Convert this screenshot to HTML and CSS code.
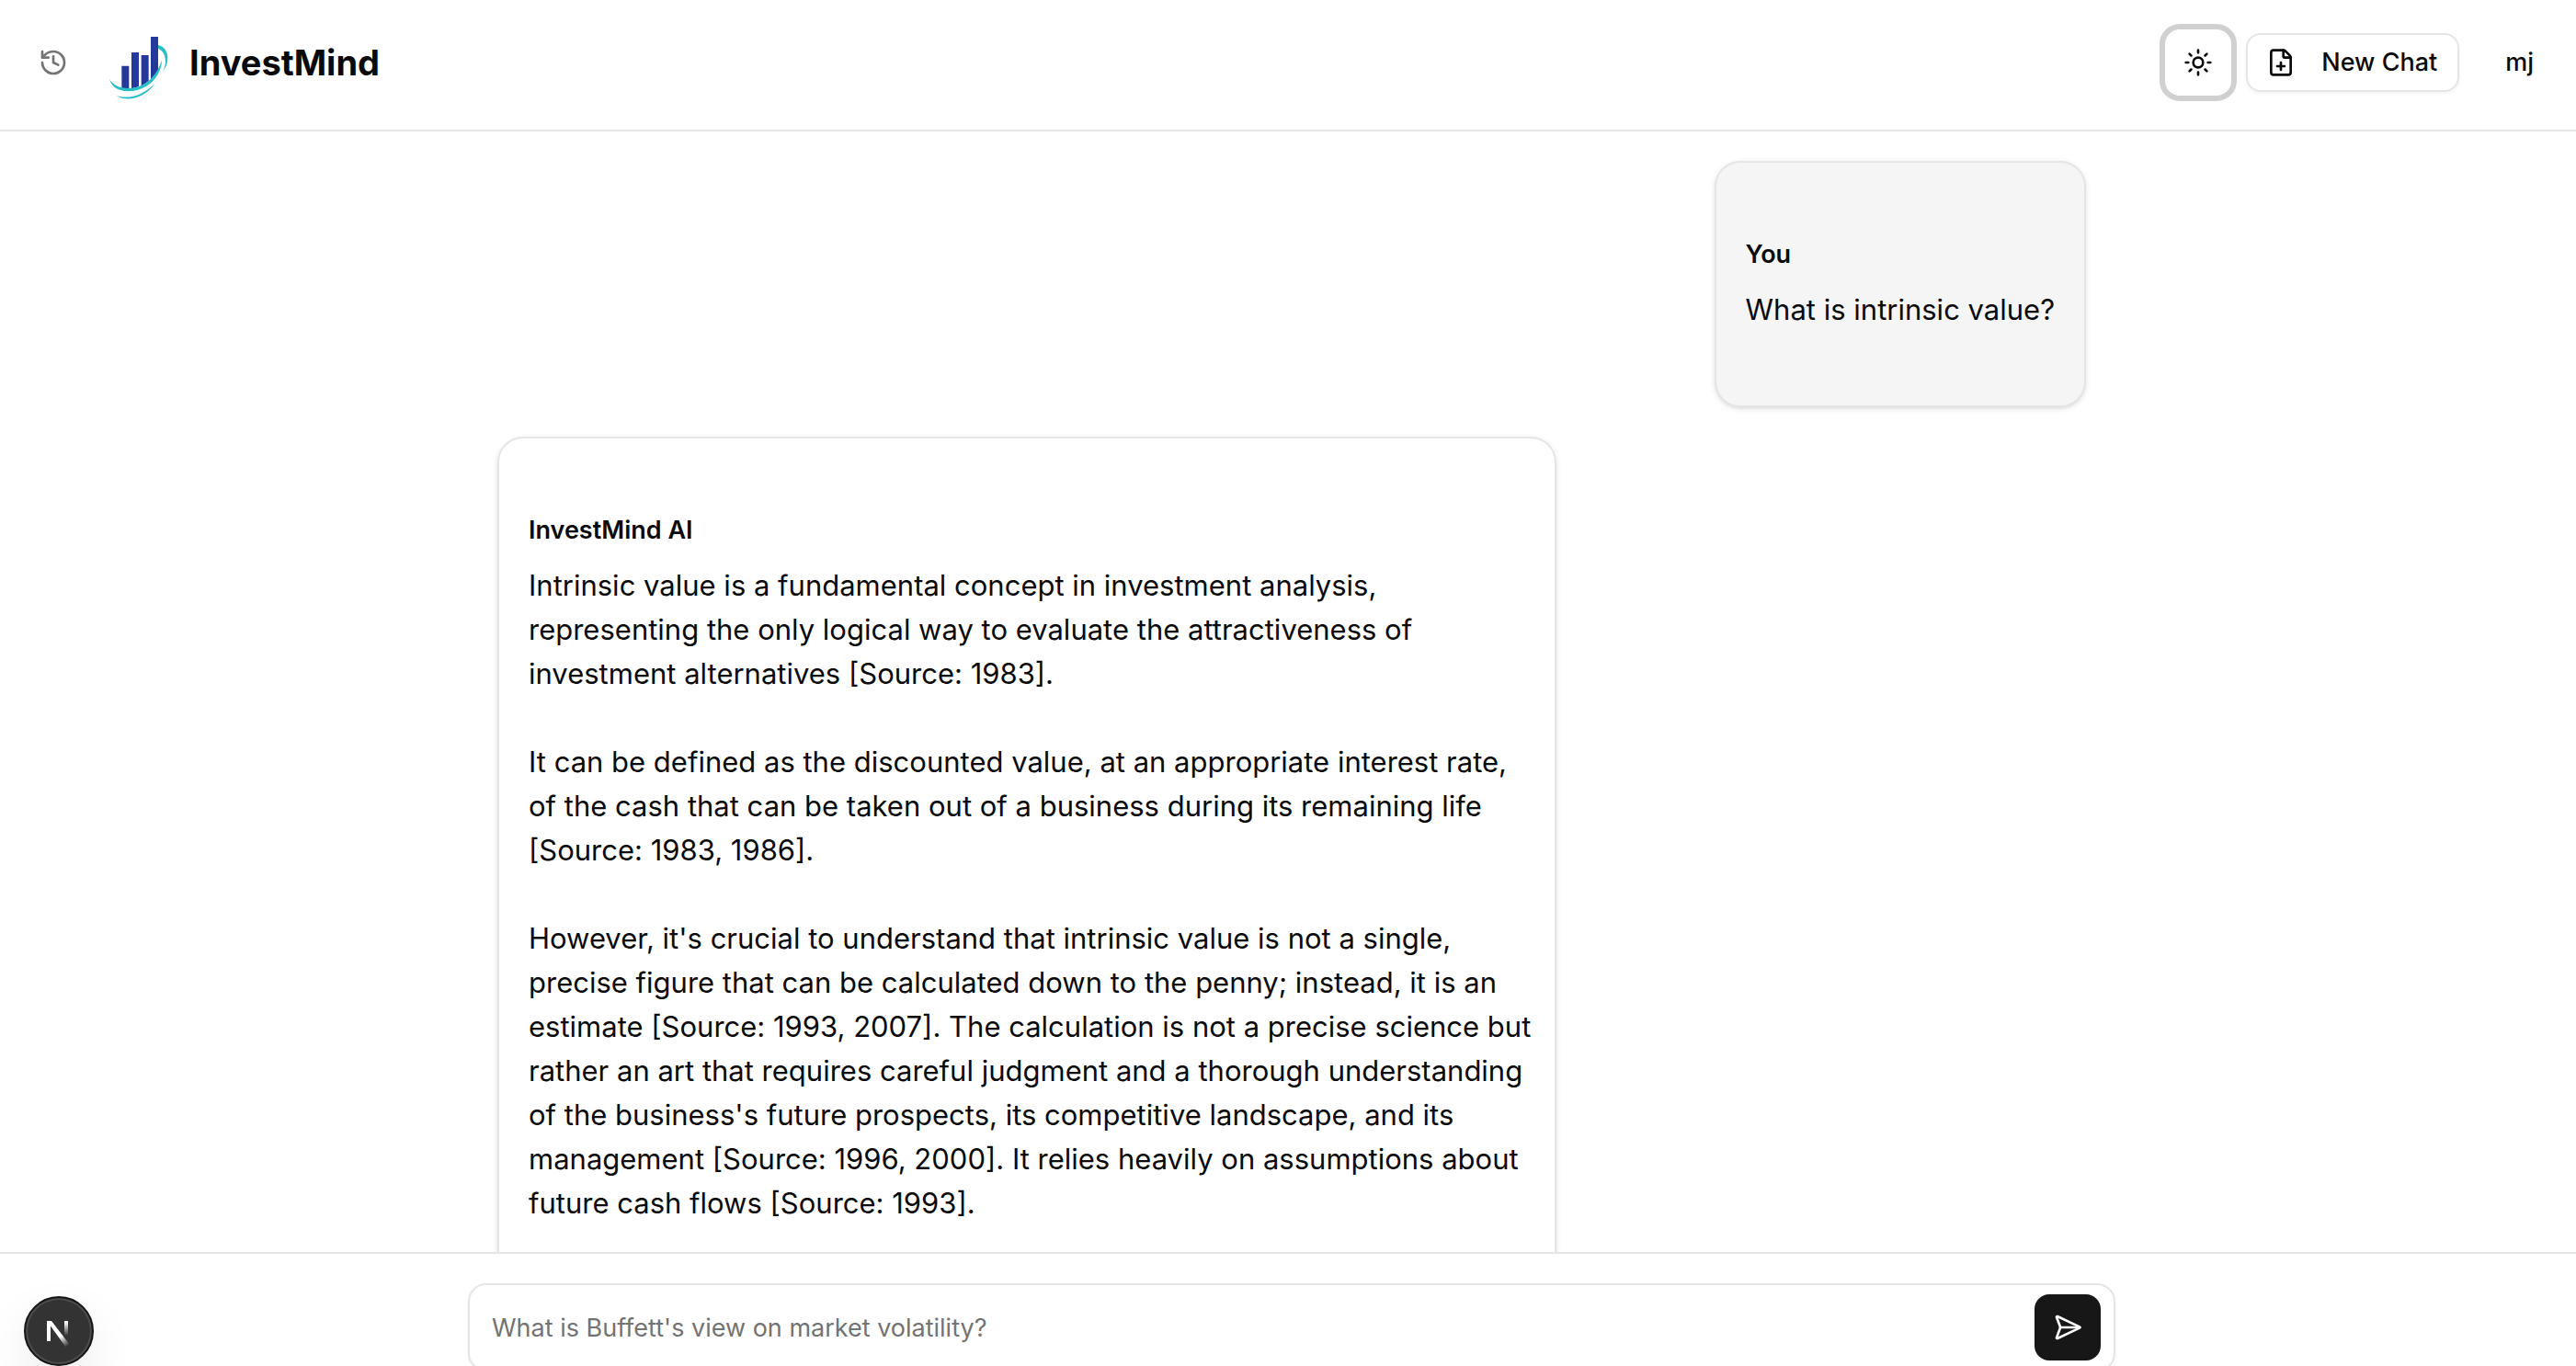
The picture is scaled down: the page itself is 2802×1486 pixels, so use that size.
FILE: index.html
```html
<!DOCTYPE html>
<html lang="en">
<head>
<meta charset="utf-8">
<meta name="viewport" content="width=device-width, initial-scale=1">
<title>InvestMind</title>
<link rel="stylesheet" href="styles.css">
</head>
<body>
<div class="app">
  <header class="header">
    <button class="btn btn-history" type="button" aria-label="History">
      <svg class="icon" viewBox="0 0 24 24"><path d="M3 12a9 9 0 1 0 9-9 9.75 9.75 0 0 0-6.74 2.74L3 8"/><path d="M3 3v5h5"/><path d="M12 7v5l4 2"/></svg>
    </button>
    <a class="brand" href="#">
      <svg class="logo" viewBox="0 -6 240 240" aria-hidden="true">
        <path fill="#25399b" d="M67 125h24v74q-12 2-24-2zM99 81h24v111q-12 5-24 7zM131 90h24v84q-10 9-24 16zM162 30h24v108q-8 18-24 30z"/>
        <path fill="#27bfc6" d="M27 168c10 18 32 30 62 30 54 0 92-38 109-92 0 52-46 102-109 102-34 0-56-16-62-40z"/>
        <path fill="#27bfc6" d="M186 57c30 6 44 46 16 87 15-34 9-64-16-76z"/>
        <path fill="#27bfc6" d="M49 222c44 14 92-4 126-40-24 40-84 66-126 40z"/>
      </svg>
      <span class="brand-name">InvestMind</span>
    </a>
    <div class="actions">
      <button class="btn btn-theme" type="button" aria-label="Toggle theme">
        <svg class="icon" viewBox="0 0 24 24"><circle cx="12" cy="12" r="4"/><path d="M12 2v2M12 20v2M4.93 4.93l1.41 1.41M17.66 17.66l1.41 1.41M2 12h2M20 12h2M6.34 17.66l-1.41 1.41M19.07 4.93l-1.41 1.41"/></svg>
      </button>
      <button class="btn btn-new" type="button">
        <svg class="icon" viewBox="0 0 24 24"><path d="M6 22a2 2 0 0 1-2-2V4a2 2 0 0 1 2-2h8a2.4 2.4 0 0 1 1.704.706l3.588 3.588A2.4 2.4 0 0 1 20 8v12a2 2 0 0 1-2 2z"/><path d="M14 2v5a1 1 0 0 0 1 1h5M9 15h6M12 12v6"/></svg>
        New Chat
      </button>
      <button class="btn btn-user" type="button">mj</button>
    </div>
  </header>

  <main class="messages">
    <div class="column thread">
      <article class="card card-user">
        <h2 class="author">You</h2>
        <p class="text">What is intrinsic value?</p>
      </article>
      <article class="card card-ai">
        <h2 class="author">InvestMind AI</h2>
        <p class="text">Intrinsic value is a fundamental concept in investment analysis,<br>
          representing the only logical way to evaluate the attractiveness of<br>
          investment alternatives [Source: 1983].</p>
        <p class="text">It can be defined as the discounted value, at an appropriate interest rate,<br>
          of the cash that can be taken out of a business during its remaining life<br>
          [Source: 1983, 1986].</p>
        <p class="text">However, it's crucial to understand that intrinsic value is not a single,<br>
          precise figure that can be calculated down to the penny; instead, it is an<br>
          estimate [Source: 1993, 2007]. The calculation is not a precise science but<br>
          rather an art that requires careful judgment and a thorough understanding<br>
          of the business's future prospects, its competitive landscape, and its<br>
          management [Source: 1996, 2000]. It relies heavily on assumptions about<br>
          future cash flows [Source: 1993].</p>
      </article>
    </div>
  </main>

  <footer class="footer">
    <form class="column composer">
      <input class="prompt" type="text" aria-label="Message" placeholder="What is Buffett's view on market volatility?">
      <button class="btn btn-send" type="button" aria-label="Send">
        <svg class="icon" viewBox="0 0 24 24"><path d="M3.714 3.048a.498.498 0 0 0-.683.627l2.843 7.627a2 2 0 0 1 0 1.396l-2.842 7.627a.498.498 0 0 0 .682.627l18-8.5a.5.5 0 0 0 0-.904z"/><path d="M6 12h16"/></svg>
      </button>
    </form>
  </footer>
</div>

<button class="dev-badge" type="button" aria-label="Open dev tools">
  <svg class="dev-icon" viewBox="0 0 40 40" aria-hidden="true">
    <defs>
      <linearGradient id="diag" x1="20" y1="23" x2="30" y2="36" gradientUnits="userSpaceOnUse"><stop offset=".2" stop-color="#fff"/><stop offset="1" stop-color="#fff" stop-opacity="0"/></linearGradient>
      <linearGradient id="stem" x1="0" y1="9" x2="0" y2="25" gradientUnits="userSpaceOnUse"><stop offset=".1" stop-color="#fff"/><stop offset="1" stop-color="#fff" stop-opacity="0"/></linearGradient>
    </defs>
    <path d="M7 9h4v22H7z" fill="#fff"/>
    <path d="M7 9h5l20 26-4 3z" fill="url(#diag)"/>
    <path d="M26 9h4v16h-4z" fill="url(#stem)"/>
  </svg>
</button>
</body>
</html>
```
FILE: styles.css
```css
* { box-sizing: border-box; }

body {
  margin: 0;
  height: 100vh;
  overflow: hidden;
  background: #fff;
  color: #0a0a0a;
  font-family: Inter, "Liberation Sans", sans-serif;
  font-size: 31px;
}

/* The composer's lower padding runs past the fold. */
.app {
  display: flex;
  flex-direction: column;
  height: calc(100vh + 38px);
}

.header {
  display: flex;
  flex: none;
  align-items: center;
  padding: 28px 12px 33px 32px;
  border-bottom: 2px solid #e5e5e5;
}

.icon {
  flex: none;
  width: 32px;
  height: 32px;
  fill: none;
  stroke: currentColor;
  stroke-width: 2;
  stroke-linecap: round;
  stroke-linejoin: round;
}

.btn {
  display: flex;
  align-items: center;
  justify-content: center;
  height: 64px;
  padding: 0;
  border: 0;
  border-radius: 16px;
  background: transparent;
  color: inherit;
  font: 500 27px/40px Inter, "Liberation Sans", sans-serif;
}

.btn-history {
  width: 52px;
  color: #737373;
}

.brand {
  display: flex;
  align-items: center;
  gap: 16px;
  margin-left: 26px;
  color: inherit;
  text-decoration: none;
}

.logo {
  width: 80px;
  height: 80px;
  overflow: visible;
}

.brand-name {
  font-size: 38px;
  font-weight: 700;
  line-height: 56px;
}

.actions {
  display: flex;
  align-items: center;
  gap: 16px;
  margin-left: auto;
}

.btn-theme {
  width: 72px;
  height: 72px;
  box-shadow: 0 0 0 6px #d0d0d0;
}

.btn-new {
  gap: 28px;
  padding: 0 22px 0 20px;
  border: 2px solid #e5e5e5;
  box-shadow: 0 2px 4px rgb(0 0 0 / 5%);
}

.btn-user { padding: 0 34px; }

.messages {
  flex: 1;
  min-height: 0;
  overflow: hidden;
  padding: 32px 32px 0 40px;
}

.column {
  max-width: 1792px;
  margin: 0 auto;
}

.thread {
  display: flex;
  flex-direction: column;
  gap: 32px;
  padding: 0 32px;
}

.card {
  padding: 80px 32px;
  border: 2px solid #e5e5e5;
  border-radius: 28px;
  box-shadow: 0 2px 6px rgb(0 0 0 / 10%), 0 2px 4px -2px rgb(0 0 0 / 10%);
}

.card-user {
  align-self: flex-end;
  background: #f5f5f5;
}

.card-ai {
  width: 100%;
  max-width: 1152px;
  padding-right: 16px;
}

.author {
  margin: 0 0 16px;
  font-size: 27px;
  font-weight: 600;
  line-height: 40px;
}

.text {
  margin: 0;
  line-height: 48px;
}

.text + .text { margin-top: 48px; }

.footer {
  flex: none;
  padding: 32px 32px 32px 40px;
  border-top: 2px solid #e5e5e5;
}

.composer {
  display: flex;
  align-items: center;
  padding: 10px 14px 10px 24px;
  border: 2px solid #e5e5e5;
  border-radius: 20px;
  box-shadow: 0 2px 4px rgb(0 0 0 / 5%);
}

.prompt {
  flex: 1;
  min-width: 0;
  height: 72px;
  padding: 0;
  border: 0;
  outline: 0;
  background: transparent;
  color: inherit;
  font: 400 27px/40px Inter, "Liberation Sans", sans-serif;
}

.prompt::placeholder {
  color: #737373;
  opacity: 1;
}

.btn-send {
  width: 72px;
  height: 72px;
  background: #171717;
  color: #fafafa;
}

.dev-badge {
  position: fixed;
  bottom: 0;
  left: 26px;
  display: flex;
  align-items: center;
  justify-content: center;
  width: 76px;
  height: 76px;
  padding: 0;
  border: 2px solid #171717;
  border-radius: 50%;
  background: #333;
  box-shadow: inset 0 0 0 2px #4d4d4d, 0 20px 50px rgb(0 0 0 / 8%);
}

.dev-icon {
  width: 40px;
  height: 40px;
}
```
